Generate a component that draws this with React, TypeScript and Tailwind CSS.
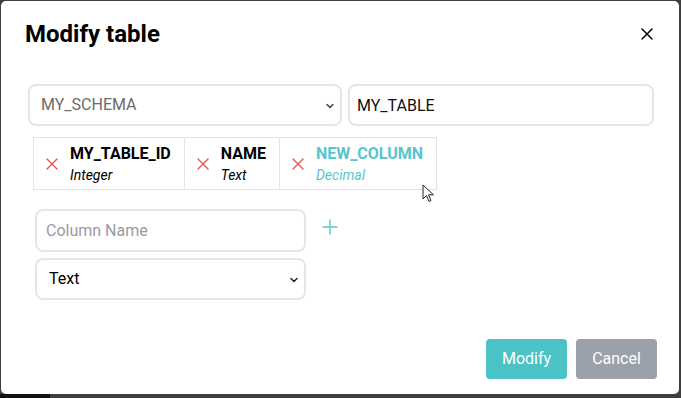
import { Plus, ChevronDown } from 'lucide-react'

const COLUMNS = [
  { name: 'MY_TABLE_ID', type: 'Integer', fresh: false },
  { name: 'NAME', type: 'Text', fresh: false },
  { name: 'NEW_COLUMN', type: 'Decimal', fresh: true },
]

function Cross({ size, className, width = 1.6 }: { size: number; className?: string; width?: number }) {
  return (
    <svg width={size} height={size} viewBox="0 0 12 12" className={className}>
      <path d="M1 1 L11 11 M11 1 L1 11" stroke="currentColor" strokeWidth={width} strokeLinecap="round" fill="none" />
    </svg>
  )
}

function Cursor() {
  return (
    <svg className="absolute left-[421px] top-[183px]" width="14" height="20" viewBox="0 0 14 20">
      <path d="M1 1 L1 15 L4.5 11.5 L7 17.5 L9 16.6 L6.6 10.8 L11.5 10.8 Z" fill="#fff" stroke="#222" strokeWidth="1" strokeLinejoin="round" />
    </svg>
  )
}

export default function App() {
  return (
    <div className="relative h-[398px] w-[681px] bg-[#3f3f3f] pt-px pl-px pr-[2px] pb-[4px] font-['Roboto',sans-serif]">
      <div className="absolute bottom-0 left-0 h-[4px] w-[50px] bg-[#111]" />
      <div className="relative flex h-full flex-col rounded-[5px] bg-white">
        <header className="flex items-center justify-between pl-6 pr-[26px] pt-[17px]">
          <h1 className="text-[24px] font-bold leading-8 text-black">Modify table</h1>
          <button className="text-black"><Cross size={12} width={1.5} /></button>
        </header>

        <div className="mt-[34px] flex gap-[6px] pl-[27px] pr-[25px]">
          <div className="relative w-[314px]">
            <select className="h-[42px] w-full appearance-none rounded-[8px] border-2 border-[#e6e6ea] bg-white pl-[11px] text-[16px] text-[#6b6b6b] outline-none">
              <option>MY_SCHEMA</option>
            </select>
            <ChevronDown className="pointer-events-none absolute right-[6px] top-[16px] size-[12px] text-[#444]" strokeWidth={3} />
          </div>
          <input
            defaultValue="MY_TABLE"
            className="h-[42px] flex-1 rounded-[8px] border-2 border-[#e6e6ea] pl-[7px] text-[16px] text-[#111] outline-none"
          />
        </div>

        <div className="ml-[32px] mt-[11px] flex self-start border border-[#e4e4e7]">
          {COLUMNS.map((c, i) => (
            <div key={c.name} className={'flex h-[51px] items-center gap-[12px] pl-[12px] pr-[13px] ' + (i > 0 ? 'border-l border-[#e4e4e7]' : '')}>
              <Cross size={12} className="text-[#ef5050]" width={1.4} />
              <div className="flex flex-col">
                <span className={'text-[16px] font-bold leading-[22px] ' + (c.fresh ? 'text-[#55c6d0]' : 'text-black')}>{c.name}</span>
                <span className={'text-[14px] italic leading-[20px] ' + (c.fresh ? 'text-[#55c6d0]' : 'text-black')}>{c.type}</span>
              </div>
            </div>
          ))}
        </div>

        <div className="ml-[34px] mt-[19px] flex items-start gap-[12px]">
          <div className="flex w-[271px] flex-col gap-[6px]">
            <input
              placeholder="Column Name"
              className="h-[43px] w-full rounded-[8px] border-2 border-[#e6e6ea] pl-[9px] text-[16px] text-[#111] outline-none placeholder:text-[#9a9a9f]"
            />
            <div className="relative">
              <select className="h-[42px] w-full appearance-none rounded-[8px] border-2 border-[#e6e6ea] bg-white pl-[12px] text-[16px] text-black outline-none">
                <option>Text</option>
              </select>
              <ChevronDown className="pointer-events-none absolute right-[6px] top-[16px] size-[12px] text-[#222]" strokeWidth={3} />
            </div>
          </div>
          <button className="mt-[6px] text-[#55c6d0]"><Plus className="size-[24px]" strokeWidth={1.4} /></button>
        </div>

        <footer className="mt-auto flex justify-end gap-[9px] pb-[15px] pr-[22px]">
          <button className="h-[40px] w-[81px] rounded-[4px] bg-[#4bc3c6] text-[16px] text-white">Modify</button>
          <button className="h-[40px] w-[81px] rounded-[4px] bg-[#9ba1ab] text-[16px] text-white">Cancel</button>
        </footer>
        <Cursor />
      </div>
    </div>
  )
}
